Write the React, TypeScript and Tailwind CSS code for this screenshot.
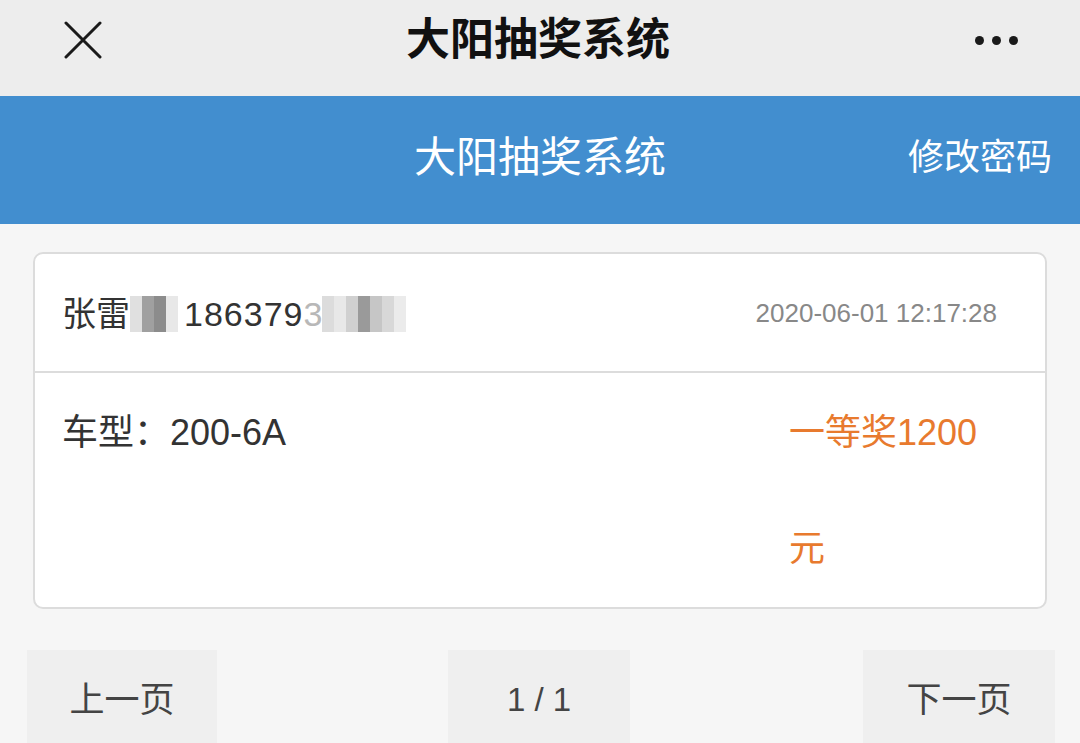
import React from "react";

const font = { fontFamily: '"Liberation Sans", "Noto Sans CJK SC", sans-serif' };

function Pixelated({ cells }: { cells: string[] }) {
  return (
    <span className="inline-flex align-middle">
      {cells.map((c, i) => (
        <span key={i} className="inline-block w-[12px] h-[36px]" style={{ background: c }} />
      ))}
    </span>
  );
}

export default function App() {
  return (
    <div className="w-[1080px] h-[743px] overflow-hidden bg-[#f6f6f6]" style={font}>
      {/* WeChat top bar */}
      <div className="h-[96px] bg-[#ededed] flex items-center justify-between px-[64px] relative">
        <svg width="38" height="38" viewBox="0 0 38 38" className="mb-[16px]">
          <path d="M2 2 L36 36 M36 2 L2 36" stroke="#1a1a1a" strokeWidth="3" strokeLinecap="round" />
        </svg>
        <div className="absolute left-0 right-0 top-[14px] text-center text-[44px] font-bold text-[#111] leading-[52px] pr-[4px]">
          大阳抽奖系统
        </div>
        <div className="flex gap-[8px] mr-[-2px] mb-[16px]">
          <span className="w-[9px] h-[9px] rounded-full bg-[#1a1a1a]" />
          <span className="w-[9px] h-[9px] rounded-full bg-[#1a1a1a]" />
          <span className="w-[9px] h-[9px] rounded-full bg-[#1a1a1a]" />
        </div>
      </div>
      {/* Blue header */}
      <div className="h-[128px] bg-[#428ecf] relative flex items-center">
        <div className="absolute left-0 right-0 text-center text-white text-[42px] leading-[50px] top-[37px]">
          大阳抽奖系统
        </div>
        <div className="ml-auto mr-[28px] text-white text-[36px] leading-[44px] mb-[4px]">修改密码</div>
      </div>
      {/* Card */}
      <div className="px-[33px] pt-[28px]">
        <div className="bg-white border-2 border-[#dcdcdc] rounded-[10px] overflow-hidden">
          <div className="h-[119px] flex items-center justify-between pl-[27px] pr-[48px] border-b-2 border-[#dcdcdc]">
            <div className="flex items-center text-[34px] text-[#333] mt-[3px]">
              <span>张雷</span>
              <Pixelated cells={["#e0e0e0", "#a0a0a0", "#8c8c8c", "#e8e8e8"]} />
              <span className="ml-[6px] tracking-[1px]">186379</span>
              <span className="text-[#b8b8b8]">3</span>
              <Pixelated cells={["#dcdcdc", "#e8e8e8", "#d0d0d0", "#9a9a9a", "#c6c6c6", "#d8d8d8", "#ebebeb"]} />
            </div>
            <div className="text-[26px] text-[#888] mt-[2px]">2020-06-01 12:17:28</div>
          </div>
          <div className="h-[234px] flex pl-[27px] pt-[34px]">
            <div className="text-[36px] text-[#333] leading-[52px] flex-1">车型：200-6A</div>
            <div className="w-[230px] mr-[26px] text-[36px] text-[#e87a2e] leading-[116px] mt-[-32px]">
              <div className="w-[210px] break-all">一等奖1200 元</div>
            </div>
          </div>
        </div>
      </div>
      {/* Pagination */}
      <div className="flex justify-between px-[27px] pt-[41px]">
        <div className="w-[190px] h-[100px] bg-[#efefef] flex items-center justify-center text-[35px] text-[#444]">上一页</div>
        <div className="w-[182px] h-[100px] bg-[#efefef] flex items-center justify-center text-[33px] text-[#444] mr-[2px]">1 / 1</div>
        <div className="w-[192px] h-[100px] bg-[#efefef] flex items-center justify-center text-[35px] text-[#444] mr-[-2px]">下一页</div>
      </div>
    </div>
  );
}
